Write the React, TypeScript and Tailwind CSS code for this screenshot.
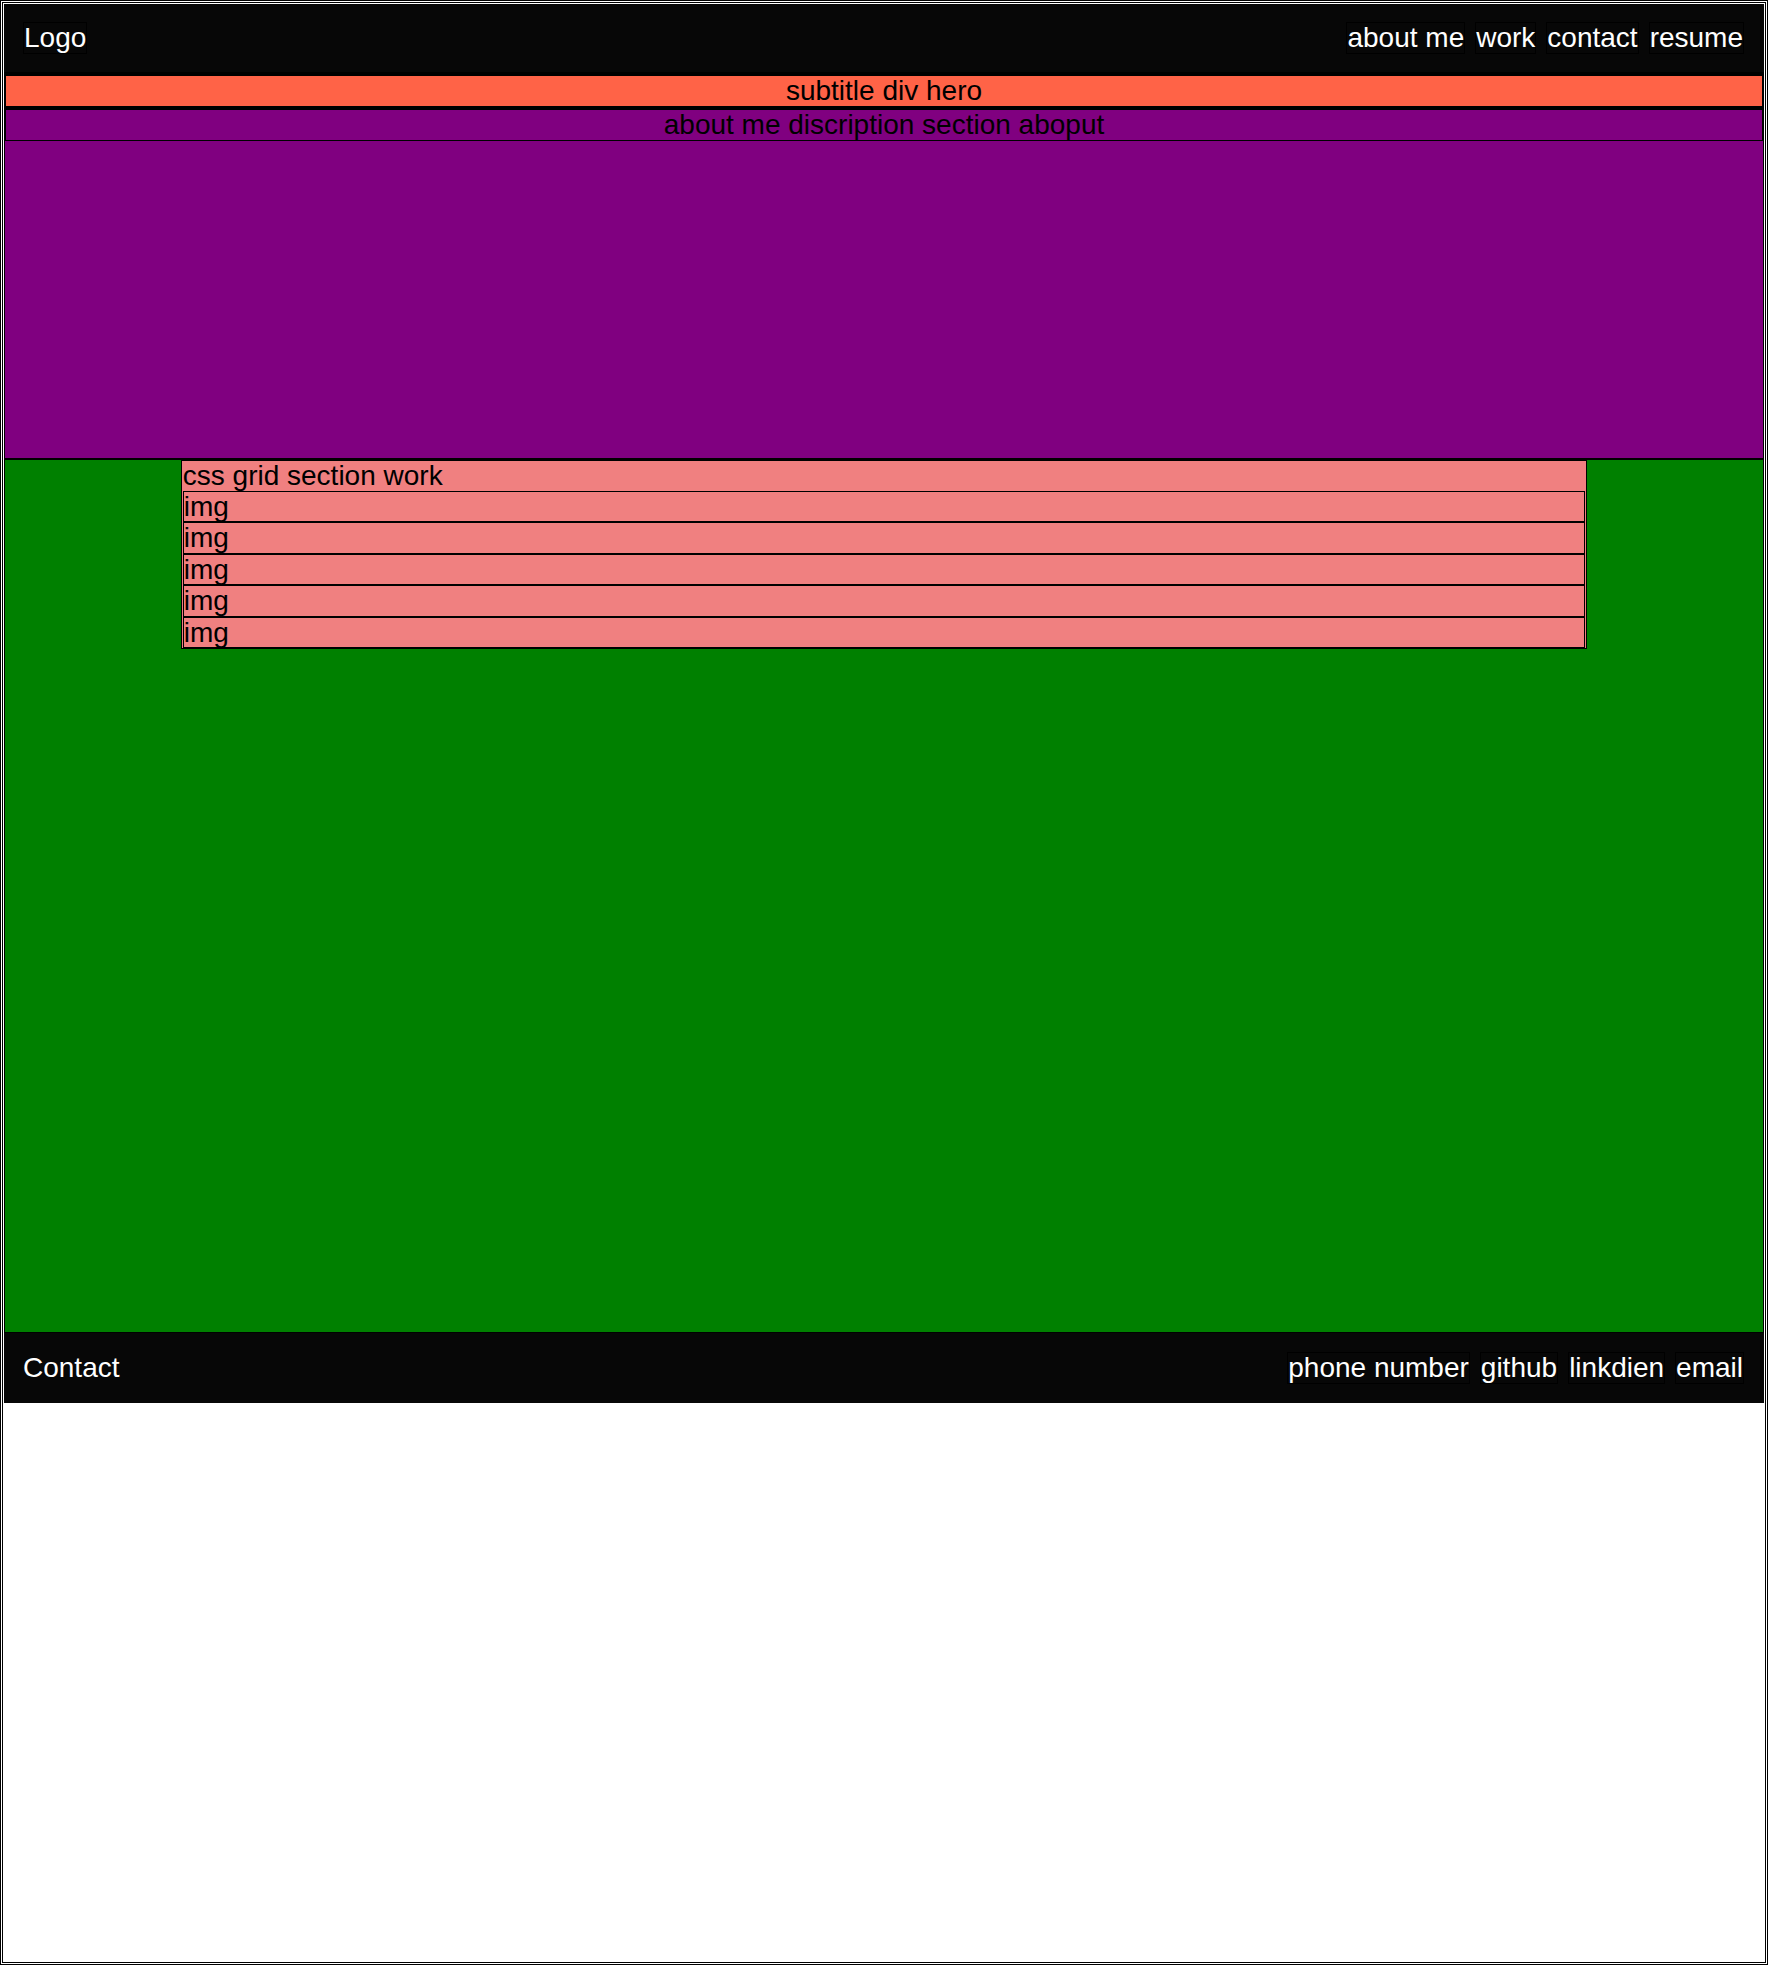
import React from "react";

const font = { fontFamily: '"Liberation Sans", Arial, sans-serif' };

function NavItem({ children }: { children: React.ReactNode }) {
  return (
    <span className="border border-black leading-[30px] text-white whitespace-nowrap">
      {children}
    </span>
  );
}

export default function App() {
  return (
    <div
      className="w-[1768px] h-[1965px] border-[3px] border-double border-black p-px bg-white text-[28px]"
      style={font}
    >
      <div className="flex flex-col bg-black">
        <header className="h-[68px] bg-[#070707] flex items-center justify-between pl-[19px] pr-[20px]">
          <span className="border border-black leading-[30px] text-white">Logo</span>
          <nav className="flex items-center gap-[10px]">
            <NavItem>about me</NavItem>
            <NavItem>work</NavItem>
            <NavItem>contact</NavItem>
            <NavItem>resume</NavItem>
          </nav>
        </header>

        <div className="mx-px mt-[3px] border border-black bg-[#ff6347] text-center text-black leading-[30px]">
          subtitle div hero
        </div>

        <section className="mt-px h-[351px] border border-black bg-[#800080]">
          <div className="border border-black text-center text-black leading-[30px]">
            about me discription section aboput
          </div>
        </section>

        <section className="h-[874px] border border-black bg-[#008000]">
          <div className="w-4/5 mx-auto border border-black bg-[#f08080] px-px text-black">
            <div className="leading-[29.5px]">css grid section work</div>
            {[0, 1, 2, 3, 4].map((i) => (
              <div key={i} className="border border-black leading-[29.5px]">
                img
              </div>
            ))}
          </div>
        </section>

        <footer className="h-[70px] bg-[#070707] flex items-center justify-between pl-[19px] pr-[20px]">
          <span className="leading-[30px] text-white">Contact</span>
          <nav className="flex items-center gap-[10px]">
            <NavItem>phone number</NavItem>
            <NavItem>github</NavItem>
            <NavItem>linkdien</NavItem>
            <NavItem>email</NavItem>
          </nav>
        </footer>
      </div>
    </div>
  );
}
